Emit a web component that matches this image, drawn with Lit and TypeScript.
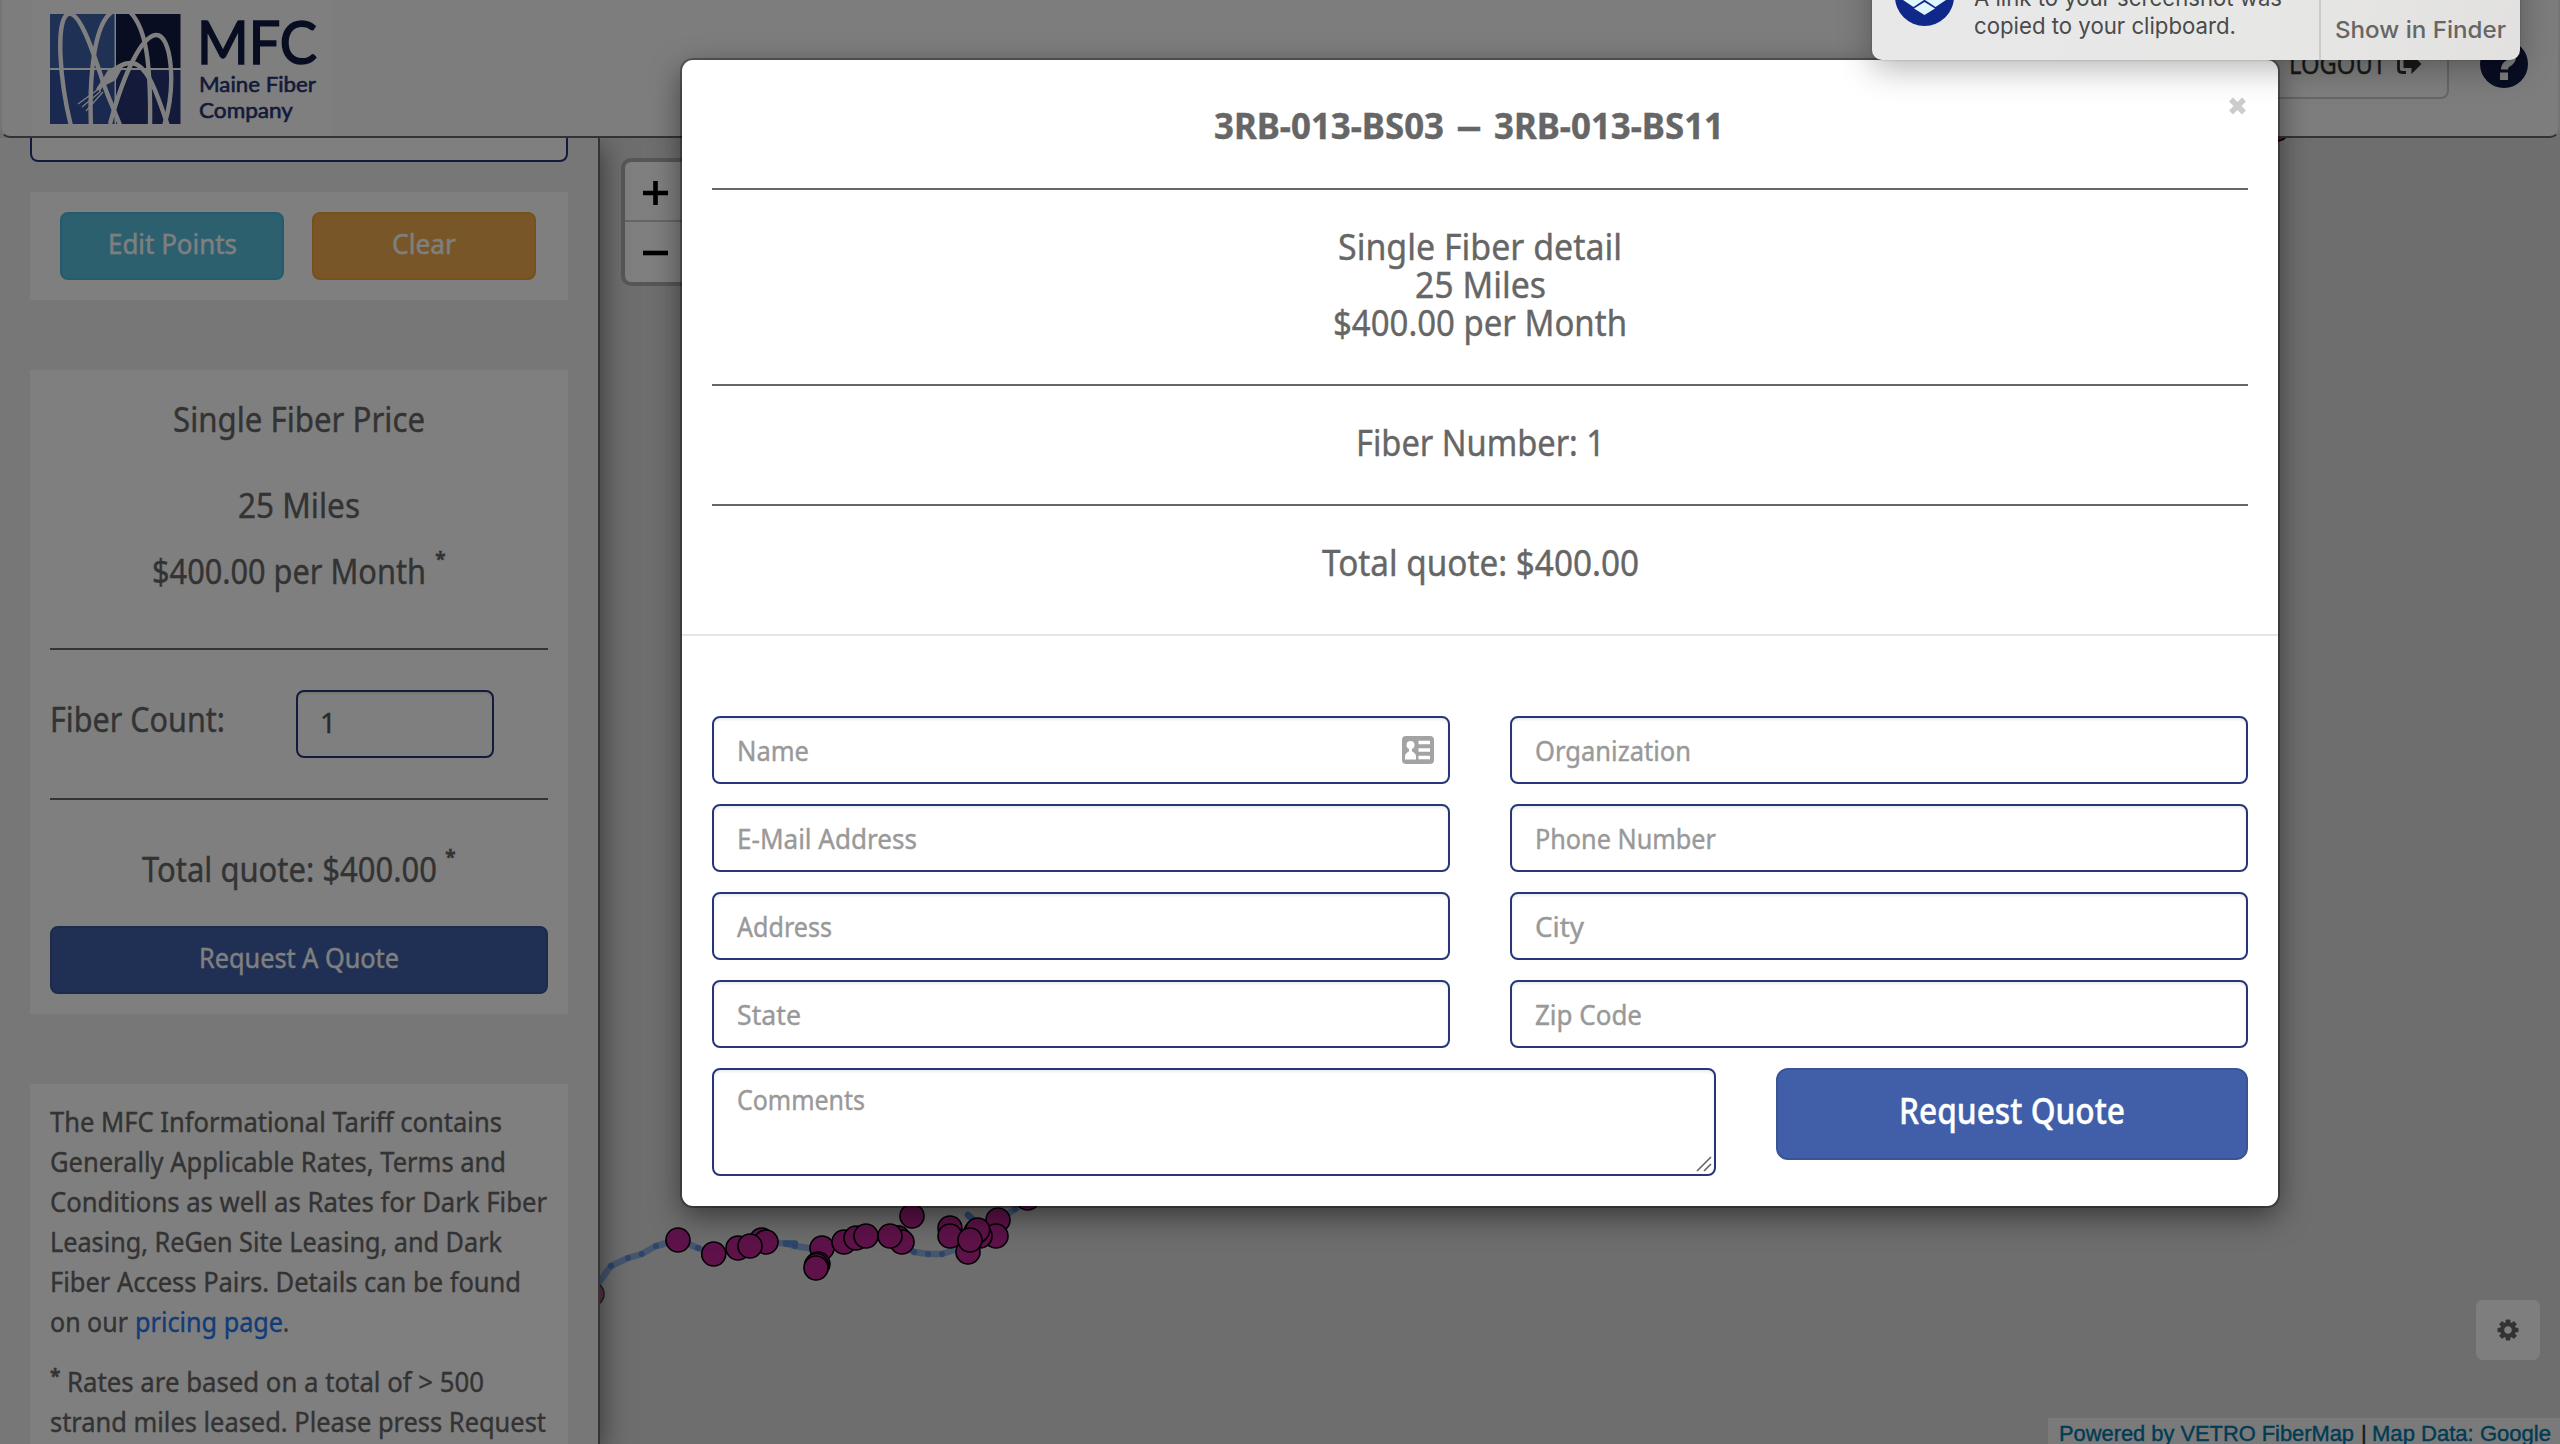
import { LitElement, html, css, svg } from "lit";
import { customElement, property } from "lit/decorators.js";

/** Text set on one line and condensed or widened to a given width. */
@customElement("fit-text")
class FitText extends LitElement {
  @property({ type: Number }) w = 100;
  @property() text = "";

  static styles = css`
    :host {
      display: block;
      white-space: nowrap;
      flex: none;
    }
    .run {
      display: inline-block;
      transform-origin: 0 50%;
      vertical-align: top;
    }
  `;

  render() {
    return html`<span class="run">${this.text}</span>`;
  }

  updated() {
    const run = this.renderRoot.querySelector(".run") as HTMLElement;
    this.style.width = `${this.w}px`;
    run.style.transform = "none";
    const natural = run.getBoundingClientRect().width;
    if (natural > 0) run.style.transform = `scaleX(${this.w / natural})`;
  }
}

const fit = (text: string, w: number, cls = "") =>
  html`<fit-text class=${cls} .text=${text} .w=${w}></fit-text>`;

const SITES: [number, number][] = [
  [678, 1240], [713.7, 1254], [738, 1248], [761.7, 1240], [766, 1242], [750, 1246],
  [822, 1248], [818, 1264], [816.5, 1265.5], [816, 1268], [844, 1242], [856, 1238],
  [866, 1236], [898, 1238], [902, 1242], [890, 1236], [912, 1216], [950, 1228],
  [998, 1220], [996, 1236], [980, 1236], [976, 1232], [968, 1252], [950, 1236],
  [977.7, 1230], [970, 1240], [1027.7, 1198], [2277, 129],
];

const ROUTE: [number, number][] = [
  [596, 1288], [600, 1281], [611, 1266], [628, 1258], [641.7, 1254], [656, 1246], [678, 1240],
  [698, 1248], [713.7, 1254], [738, 1248], [766, 1242], [786, 1243.5], [795, 1246],
  [822, 1250], [844, 1242], [866, 1236], [890, 1236], [914, 1252], [928, 1254], [942, 1254],
  [960, 1248], [980, 1228], [998, 1220], [1015, 1209], [1030, 1200],
];

const TARIFF: [string, number][] = [
  ["The MFC Informational Tariff contains", 452],
  ["Generally Applicable Rates, Terms and", 456],
  ["Conditions as well as Rates for Dark Fiber", 497],
  ["Leasing, ReGen Site Leasing, and Dark", 452],
  ["Fiber Access Pairs. Details can be found", 471],
];

const FIELDS: [string, number][] = [
  ["Name", 72], ["Organization", 156],
  ["E-Mail Address", 180], ["Phone Number", 181],
  ["Address", 95], ["City", 49],
  ["State", 64], ["Zip Code", 107],
];

const gearTeeth = [0, 45, 90, 135, 180, 225, 270, 315];

@customElement("app-root")
class AppRoot extends LitElement {
  static styles = css`
    :host {
      display: block;
      position: relative;
      width: 2560px;
      height: 1444px;
      overflow: hidden;
      font-family: "Noto Sans", "Open Sans", sans-serif;
      color: #666;
      background: #dcdcdc;
      -webkit-text-stroke-width: 0.4px;
    }
    * { box-sizing: border-box; }
    .page { display: flex; flex-direction: column; height: 1444px; }
    .header {
      position: relative;
      z-index: 3;
      flex: none;
      height: 138px;
      display: flex;
      align-items: flex-start;
      padding: 0 30px 0 30px;
      background: #fafafa;
      border: 2px solid #e9e9e9;
      border-top: 0;
      border-bottom-color: #666;
      border-radius: 0 0 10px 10px;
    }
    .logo { display: block; background: #fff; -webkit-text-stroke-width: 0; }
    .logout {
      margin: 29px 31px 0 auto;
      height: 70px;
      display: flex;
      align-items: center;
      gap: 11px;
      padding: 0 25px;
      border: 2px solid #ccc;
      border-radius: 8px;
      color: #333;
      font-size: 28px;
      line-height: 40px;
      background: #fff;
    }
    .logout-text { margin-top: -2px; }
    .logout-icon { display: block; }
    .help {
      width: 48px;
      height: 48px;
      margin-top: 40px;
      display: block;
    }
    .body { flex: 1; display: flex; min-height: 0; }
    .sidebar {
      position: relative;
      z-index: 2;
      flex: none;
      width: 600px;
      height: 1306px;
      padding: 0 30px;
      background: #eee;
      border-right: 2px solid #666;
      box-shadow: 2px 8px 26px rgba(0, 0, 0, 0.5);
      clip-path: inset(0 -60px 0 0);
    }
    .search {
      height: 24px;
      border: 2px solid #27357a;
      border-top: 0;
      border-radius: 0 0 8px 8px;
      background: #fff;
    }
    .card { background: #fff; padding: 0 20px; }
    .actions { margin-top: 30px; height: 108px; display: flex; gap: 28px; padding: 20px 30px; }
    .btn {
      height: 68px;
      display: flex;
      align-items: center;
      justify-content: center;
      border-radius: 8px;
      color: #fff;
      font-size: 28px;
      line-height: 40px;
      border: 2px solid;
      padding-bottom: 6px;
    }
    .btn.edit { width: 224px; background: #5bc0de; border-color: #46b8da; }
    .btn.clear { width: 224px; background: #f0ad4e; border-color: #eea236; }
    .btn.quote { background: #405fa8; border-color: #395596; margin-top: 37px; }
    .price {
      margin-top: 70px;
      height: 644px;
      padding-top: 29px;
      display: flex;
      flex-direction: column;
      font-size: 34px;
      line-height: 40px;
    }
    .center { display: flex; justify-content: center; }
    .miles { margin-top: 46px; }
    .monthly { margin-top: 26px; gap: 9px; }
    .total { margin-top: 49px; gap: 8px; }
    .star { font-size: 19px; line-height: 20px; margin-top: -2px; font-weight: 700; }
    .line { height: 2px; background: #666; flex: none; }
    .line.a { margin-top: 57px; }
    .line.b { margin-top: 40px; }
    .count { margin-top: 40px; height: 68px; display: flex; }
    .count-label { margin-top: 9px; }
    .count-input {
      margin-left: 71px;
      width: 198px;
      height: 68px;
      border: 2px solid #27357a;
      border-radius: 8px;
      font-size: 28px;
      line-height: 60px;
      padding-left: 22px;
      color: #555;
      box-shadow: inset 0 2px 2px rgba(0, 0, 0, 0.075);
    }
    .tariff { margin-top: 70px; height: 360px; padding-top: 17px; font-size: 28px; line-height: 40px; }
    .tariff-row { display: flex; }
    .note { margin-top: 20px; }
    .note-star { font-size: 19px; line-height: 30px; font-weight: 700; margin-right: 7px; }
    .link { color: #2478f0; margin-left: 7px; }
    .map { flex: 1; position: relative; z-index: 1; background: #dcdcdc; }
    .zoom {
      position: absolute;
      left: 21px;
      top: 20px;
      width: 70px;
      height: 128px;
      border: 4px solid #aeaeae;
      border-radius: 10px;
      background: #fff;
    }
    .zoom-icon { display: block; }
    .gear {
      position: absolute;
      right: 20px;
      bottom: 84px;
      width: 64px;
      height: 60px;
      border-radius: 7px;
      background: #fdfdfd;
      display: flex;
      align-items: center;
      justify-content: center;
    }
    .attribution {
      position: absolute;
      right: 0;
      bottom: 0;
      width: 512px;
      height: 26px;
      overflow: hidden;
      display: flex;
      gap: 7px;
      padding: 3px 0 0 11px;
      background: #f4f4f4;
      color: #0078a8;
      font-family: "Liberation Sans", Arial, sans-serif;
      font-size: 22px;
      line-height: 26px;
    }
    .bar { color: #333; width: 4px; }
    .network { position: absolute; left: 0; top: 0; z-index: 1; display: block; }
    .backdrop { position: absolute; inset: 0; z-index: 5; background: rgba(0, 0, 0, 0.5); }
    .modal {
      position: absolute;
      left: 682px;
      top: 60px;
      z-index: 6;
      width: 1596px;
      height: 1146px;
      background: #fff;
      border-radius: 11px;
      box-shadow: 0 0 0 2px rgba(0, 0, 0, 0.3), 0 10px 30px rgba(0, 0, 0, 0.5);
    }
    .summary {
      height: 576px;
      padding: 46px 30px 0;
      border-bottom: 2px solid #e5e5e5;
      font-size: 36px;
      line-height: 38px;
      display: flex;
      flex-direction: column;
      align-items: center;
      color: #666;
    }
    .title {
      display: flex;
      align-items: center;
      gap: 13px;
      font-weight: 700;
      line-height: 40px;
      margin-bottom: 42px;
      margin-right: 22px;
      font-size: 36px;
    }
    .rule { align-self: stretch; height: 2px; background: #666; flex: none; margin-bottom: 38px; }
    .gap { margin-bottom: 42px; }
    .close { position: absolute; right: 31px; top: 37px; display: block; }
    .form {
      padding: 80px 30px 30px;
      display: grid;
      grid-template-columns: 738px 738px;
      column-gap: 60px;
      row-gap: 20px;
      font-size: 28px;
      line-height: 40px;
      color: #999;
    }
    .field {
      height: 68px;
      border: 2px solid #27357a;
      border-radius: 8px;
      padding: 0 14px 1px 23px;
      display: flex;
      align-items: center;
      justify-content: space-between;
      background: #fff;
      box-shadow: inset 0 2px 3px rgba(0, 0, 0, 0.08);
    }
    .last { grid-column: 1 / 3; display: flex; gap: 60px; align-items: flex-start; }
    .comments {
      width: 1004px;
      height: 108px;
      align-items: flex-start;
      padding: 9px 1px 0 23px;
    }
    .grip { align-self: flex-end; display: block; margin-bottom: 1px; }
    .send {
      width: 472px;
      height: 92px;
      border-radius: 12px;
      border: 2px solid #395596;
      background: #405fa8;
      color: #fff;
      font-size: 36px;
      line-height: 40px;
      font-weight: 500;
      display: flex;
      align-items: center;
      justify-content: center;
      padding-bottom: 6px;
    }
    .toast {
      position: absolute;
      left: 1872px;
      top: -60px;
      z-index: 8;
      width: 648px;
      height: 120px;
      border-radius: 10px;
      background: linear-gradient(100deg, #e8e8e9, #e7e7e6 60%, #e2e1df);
      box-shadow: 0 8px 34px rgba(0, 0, 0, 0.3), 0 0 2px rgba(0, 0, 0, 0.3);
      display: flex;
      font-family: Inter, "Liberation Sans", sans-serif;
      color: #4a4a4a;
      font-size: 22.5px;
      line-height: 28px;
      -webkit-text-stroke-width: 0;
    }
    .dropbox { display: block; margin: 27px 0 0 23px; flex: none; }
    .message { margin: 44px 0 0 19px; width: 345px; }
    .finder {
      border-left: 2px solid #cbcbcb;
      padding: 76px 0 0 14px;
      font-size: 23.5px;
      line-height: 28px;
      font-weight: 500;
      color: #666;
    }
  `;

  private logo() {
    return html`<svg class="logo" width="300" height="136" viewBox="32 0 300 136">
      <rect x="50" y="14" width="64.5" height="54" fill="#4062ac" />
      <rect x="116" y="14" width="64.5" height="54" fill="#121a44" />
      <rect x="50" y="70" width="64.5" height="54" fill="#3452a0" />
      <rect x="116" y="70" width="64.5" height="54" fill="#263474" />
      <clipPath id="mark"><rect x="50" y="13" width="130.5" height="111" /></clipPath>
      <g clip-path="url(#mark)" fill="none" stroke="#fff" stroke-width="4.4">
        <path d="M71 126C60 82 55 20 68 14C79 10 92 48 103 82C109 100 117 116 121 128" />
        <path d="M91 128C89 76 94 24 112 12" />
        <path d="M130 12C146 28 151 62 150 128" />
        <path d="M110 124C124 72 142 36 156 35C171 34 177 84 164 126" />
        <path d="M98 90C108 74 120 62 132 63C148 65 157 94 168 126" />
      </g>
      <path d="M96 90L108 70L126 61L116 80Z" fill="#fff" />
      <path d="M100 88L78 104M101 91L82 107M103 92L86 111" stroke="#fff" stroke-width="1.2" />
      <g fill="#121a44" font-family="Lato, sans-serif">
        <text x="197" y="63.5" font-size="59.500" stroke="#121a44" stroke-width="1.700" textLength="120" lengthAdjust="spacingAndGlyphs">MFC</text>
        <g fill="#263474" stroke="#263474" stroke-width="0.600" font-size="22">
          <text x="199" y="92" textLength="117" lengthAdjust="spacingAndGlyphs">Maine Fiber</text>
          <text x="199" y="118" textLength="94" lengthAdjust="spacingAndGlyphs">Company</text>
        </g>
      </g>
    </svg>`;
  }

  private network() {
    const pts = ROUTE.map(([x, y]) => `${x - 600},${y - 138}`).join(" ");
    return html`<svg class="network" width="1960" height="1306">
      <polyline points=${pts} fill="none" stroke="#8cacdf" stroke-width="6.5" stroke-linejoin="round" />
      <path d="M368 1077L378 1086M186 1105.5H195M300 1090L288 1098" stroke="#5a90d4" stroke-width="6.5" stroke-linecap="round" />
      ${ROUTE.slice(2).map(([x, y]) => svg`<circle cx=${x - 600} cy=${y - 138} r="3" fill="#5c8ace" />`)}
      <circle cx="-8" cy="1156" r="12" fill="#b86a9c" stroke="#444" stroke-width="1.6" />
      ${SITES.map(([x, y]) => svg`<circle cx=${x - 600} cy=${y - 138} r="12" fill="#bc2492" stroke="#000" stroke-width="1.6" />`)}
    </svg>`;
  }

  private sidebar() {
    return html`<div class="sidebar">
      <div class="search"></div>
      <div class="card actions">
        <div class="btn edit">${fit("Edit Points", 129)}</div>
        <div class="btn clear">${fit("Clear", 64)}</div>
      </div>
      <div class="card price">
        <div class="center">${fit("Single Fiber Price", 252)}</div>
        <div class="center miles">${fit("25 Miles", 122)}</div>
        <div class="center monthly">${fit("$400.00 per Month", 274)}<span class="star">*</span></div>
        <div class="line a"></div>
        <div class="count">
          ${fit("Fiber Count:", 175, "count-label")}
          <div class="count-input">1</div>
        </div>
        <div class="line b"></div>
        <div class="center total">${fit("Total quote: $400.00", 295)}<span class="star">*</span></div>
        <div class="btn quote">${fit("Request A Quote", 200)}</div>
      </div>
      <div class="card tariff">
        ${TARIFF.map(([t, w]) => fit(t, w))}
        <div class="tariff-row">${fit("on our", 78)}${fit("pricing page", 148, "link")}${fit(".", 6)}</div>
        <div class="tariff-row note"><span class="note-star">*</span>${fit("Rates are based on a total of > 500", 417)}</div>
        ${fit("strand miles leased. Please press Request", 496)}
      </div>
    </div>`;
  }

  private fields() {
    return FIELDS.map(([t, w], i) => html`<div class="field">${fit(t, w)}
      ${i === 0
        ? html`<svg width="32" height="28" viewBox="0 0 32 28">
            <rect width="32" height="28" rx="4" fill="#a3a3a3" />
            <circle cx="8.5" cy="9" r="4" fill="#fff" />
            <path d="M3 23.500V20Q3.500 17 7 15.500V12H10V15.500Q13.500 17 14 20V23.500Z" fill="#fff" />
            <path d="M16.500 6.500H28M16.500 14H28M16.500 21.500H28" stroke="#fff" stroke-width="3.4" />
          </svg>`
        : ""}
    </div>`);
  }

  render() {
    return html`
      <div class="page">
        <div class="header">
          ${this.logo()}
          <div class="logout">${fit("LOGOUT", 97, "logout-text")}
            <svg class="logout-icon" width="25" height="24" viewBox="0 0 25 24">
              <path d="M9 2.500H5Q1.500 2.500 1.500 6V17Q1.500 20.500 5 20.500H9" fill="none" stroke="#333" stroke-width="2.8" />
              <path d="M6.500 8H14.500V2L24.500 12L14.500 22V16H6.500Z" fill="#333" />
            </svg>
          </div>
          <svg class="help" viewBox="0 0 48 48">
            <circle cx="24" cy="24" r="24" fill="#121a44" />
            <path d="M15.500 17.500Q16 10 24 10Q32.500 10 32.500 17Q32.500 21 28 23.500Q24.500 25.500 24.500 29.500" fill="none" stroke="#fff" stroke-width="7" />
            <rect x="20" y="32.500" width="8" height="7.500" fill="#fff" />
          </svg>
        </div>
        <div class="body">
          ${this.sidebar()}
          <div class="map">
            ${this.network()}
            <div class="zoom">
              <svg class="zoom-icon" width="62" height="120">
                <path d="M18 31H43M30.500 19V43" stroke="#000" stroke-width="4.600" />
                <path d="M0 59H62" stroke="#ccc" stroke-width="2" />
                <path d="M18 91H43" stroke="#000" stroke-width="4.600" />
              </svg>
            </div>
            <div class="gear">
              <svg width="22" height="22" viewBox="-11 -11 22 22">
                ${gearTeeth.map((a) => svg`<rect x="-2.300" y="-10.500" width="4.600" height="6" rx="0.800" fill="#666" transform="rotate(${a})" />`)}
                <circle r="5.900" fill="none" stroke="#666" stroke-width="4.200" />
              </svg>
            </div>
            <div class="attribution">
              ${fit("Powered by VETRO FiberMap", 295)}<span class="bar">|</span>${fit("Map Data: Google", 179)}
            </div>
          </div>
        </div>
      </div>
      <div class="backdrop"></div>
      <div class="modal">
        <div class="summary">
          <div class="title">${fit("3RB-013-BS03", 230)}${fit("—", 24)}${fit("3RB-013-BS11", 230)}</div>
          <div class="rule"></div>
          ${fit("Single Fiber detail", 284)}
          ${fit("25 Miles", 131)}
          ${fit("$400.00 per Month", 294, "gap")}
          <div class="rule"></div>
          ${fit("Fiber Number: 1", 249, "gap")}
          <div class="rule"></div>
          ${fit("Total quote: $400.00", 317)}
        </div>
        <svg class="close" width="19" height="18" viewBox="0 0 19 18">
          <path d="M3 2.500L16 15.500M16 2.500L3 15.500" stroke="#ccc" stroke-width="5.600" />
        </svg>
        <div class="form">
          ${this.fields()}
          <div class="last">
            <div class="field comments">${fit("Comments", 128)}
              <svg class="grip" width="18" height="18"><path d="M2 16L16 2M9 16L16 9" stroke="#666" stroke-width="1.600" /></svg>
            </div>
            <div class="send">${fit("Request Quote", 226)}</div>
          </div>
        </div>
      </div>
      <div class="toast">
        <svg class="dropbox" width="60" height="60" viewBox="0 0 60 60">
          <circle cx="29.500" cy="29.500" r="29.500" fill="#10288a" />
          <g fill="#dff6ff">
            <path d="M18.500 11L29 18L18.500 25L8 18Z" />
            <path d="M40.500 11L51 18L40.500 25L30 18Z" />
            <path d="M18.500 26L29 33L18.500 40L8 33Z" />
            <path d="M40.500 26L51 33L40.500 40L30 33Z" />
            <path d="M29.500 35L40 41.500L29.500 48L19 41.500Z" />
          </g>
        </svg>
        <div class="message">${fit("A link to your screenshot was", 308)}${fit("copied to your clipboard.", 262)}</div>
        <div class="finder">${fit("Show in Finder", 171)}</div>
      </div>
    `;
  }
}
